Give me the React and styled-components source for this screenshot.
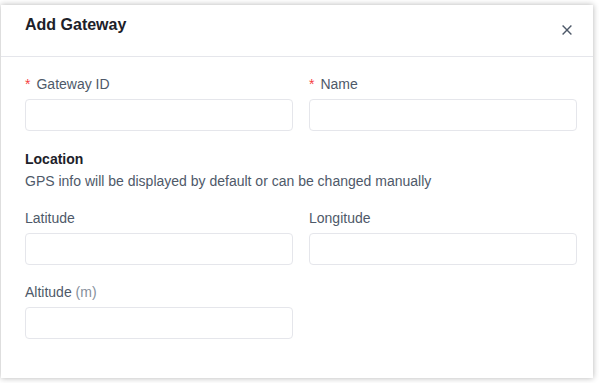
import React from "react";
import styled, { createGlobalStyle } from "styled-components";

const GlobalStyle = createGlobalStyle`
    html, body {
        margin: 0;
        padding: 0;
        background: #fff;
    }
    body {
        font-family: "Liberation Sans", Arial, sans-serif;
        font-size: 14px;
        color: #1d2129;
    }
    * {
        box-sizing: border-box;
    }
`;

const Page = styled.div`
    padding: 5px 6px 5px 1px;
    width: 599px;
    height: 383px;
    overflow: hidden;
`;

const Modal = styled.div`
    width: 592px;
    height: 373px;
    background: #fff;
    box-shadow: 0 0 6px rgba(0, 0, 0, 0.3);
`;

const Header = styled.div`
    display: flex;
    justify-content: space-between;
    align-items: flex-start;
    padding: 8px 21px 0 24px;
    height: 52px;
    border-bottom: 1px solid #e5e6eb;
`;

const Title = styled.h2`
    margin: 0;
    font-size: 16px;
    line-height: 24px;
    font-weight: 700;
    color: #1d2129;
`;

const CloseButton = styled.button`
    border: none;
    background: none;
    padding: 0;
    margin-top: 12px;
    width: 10px;
    height: 10px;
    display: flex;
    cursor: pointer;
`;

const Body = styled.div`
    padding: 16px 16px 0 24px;
`;

const Grid = styled.div`
    display: grid;
    grid-template-columns: 268px 268px;
    column-gap: 16px;
    row-gap: 16px;
    margin-bottom: ${(p) => p.$mb || 0}px;
`;

const Field = styled.div`
    display: flex;
    flex-direction: column;
`;

const Label = styled.label`
    font-size: 14px;
    line-height: 22px;
    color: #4e5969;
    margin-bottom: 4px;
`;

const Star = styled.span`
    color: #f53f3f;
    margin-right: 6px;
`;

const Unit = styled.span`
    color: #86909c;
`;

const Input = styled.input`
    height: 32px;
    width: 100%;
    border: 1px solid #e5e6eb;
    border-radius: 4px;
    padding: 0 12px;
    font-family: inherit;
    font-size: 14px;
    background: #fff;
    outline: none;
`;

const Section = styled.div`
    margin-bottom: 15px;
`;

const SectionTitle = styled.div`
    font-size: 14px;
    line-height: 22px;
    font-weight: 700;
    color: #1d2129;
`;

const SectionDesc = styled.div`
    font-size: 14px;
    line-height: 22px;
    color: #4e5969;
`;

const CloseIcon = () => (
    <svg width="10" height="10" viewBox="0 0 10 10">
        <path d="M0.6 0.6 L9.4 9.4 M9.4 0.6 L0.6 9.4" stroke="#4e5969" strokeWidth="1.4" fill="none" />
    </svg>
);

const App = () => {
    return (
        <>
            <GlobalStyle />
            <Page>
                <Modal>
                    <Header>
                        <Title>Add Gateway</Title>
                        <CloseButton aria-label="Close">
                            <CloseIcon />
                        </CloseButton>
                    </Header>
                    <Body>
                        <Grid $mb={17}>
                            <Field>
                                <Label><Star>*</Star>Gateway ID</Label>
                                <Input />
                            </Field>
                            <Field>
                                <Label><Star>*</Star>Name</Label>
                                <Input />
                            </Field>
                        </Grid>
                        <Section>
                            <SectionTitle>Location</SectionTitle>
                            <SectionDesc>GPS info will be displayed by default or can be changed manually</SectionDesc>
                        </Section>
                        <Grid>
                            <Field>
                                <Label>Latitude</Label>
                                <Input />
                            </Field>
                            <Field>
                                <Label>Longitude</Label>
                                <Input />
                            </Field>
                            <Field>
                                <Label>Altitude <Unit>(m)</Unit></Label>
                                <Input />
                            </Field>
                        </Grid>
                    </Body>
                </Modal>
            </Page>
        </>
    );
};

export default App;
